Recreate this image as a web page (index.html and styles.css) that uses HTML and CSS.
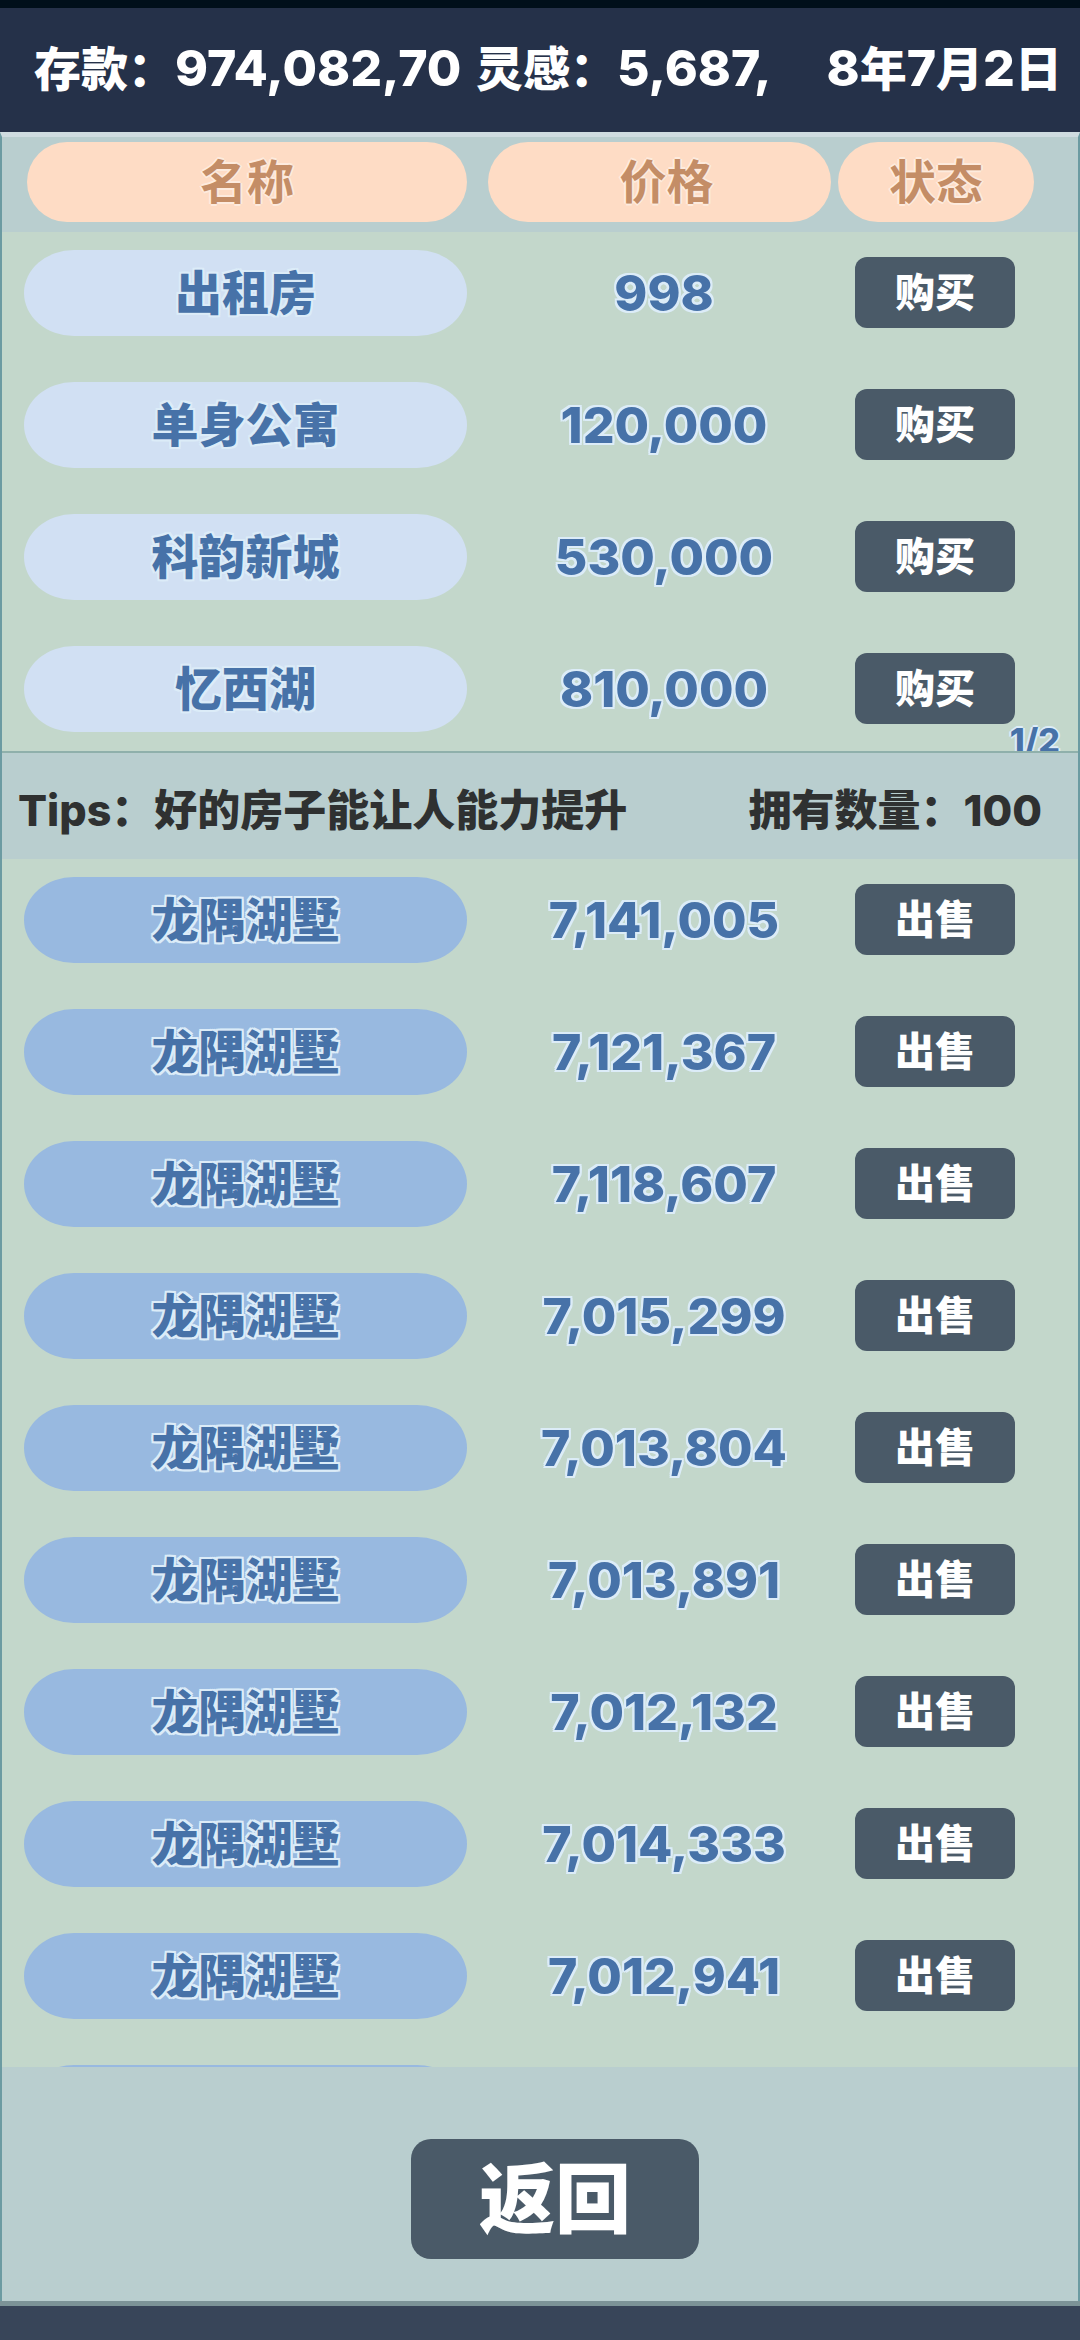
FILE: index.html
```html
<!DOCTYPE html>
<html lang="zh-CN">
<head>
  <meta charset="UTF-8" />
  <meta name="viewport" content="width=device-width, initial-scale=1.0"/>
  <title>房产</title>
  <link rel="stylesheet" href="styles.css">
</head>
<body>
  <header class="status-bar">
    <div class="stat savings">存款：<span class="digits">974,082,70</span></div>
    <div class="stat inspiration">灵感：<span class="digits">5,687,</span></div>
    <div class="stat date"><span class="digits">8</span>年<span class="digits">7</span>月<span class="digits">2</span>日</div>
  </header>

  <main class="panel">
    <section class="shop">
      <table class="houses">
        <colgroup>
          <col class="col-name"><col class="col-price"><col class="col-action">
        </colgroup>
        <thead>
          <tr>
            <th><span class="pill">名称</span></th>
            <th><span class="pill pill-price">价格</span></th>
            <th><span class="pill">状态</span></th>
          </tr>
        </thead>
        <tbody>
          <tr><td><span class="pill">出租房</span></td><td class="price">998</td><td><button class="btn">购买</button></td></tr>
          <tr><td><span class="pill">单身公寓</span></td><td class="price">120,000</td><td><button class="btn">购买</button></td></tr>
          <tr><td><span class="pill">科韵新城</span></td><td class="price">530,000</td><td><button class="btn">购买</button></td></tr>
          <tr><td><span class="pill">忆西湖</span></td><td class="price">810,000</td><td><button class="btn">购买</button></td></tr>
        </tbody>
      </table>
      <div class="page-no">1/2</div>
    </section>

    <div class="tips">
      <p>Tips：好的房子能让人能力提升</p>
      <p>拥有数量：100</p>
    </div>

    <section class="owned">
      <table class="houses">
        <colgroup>
          <col class="col-name"><col class="col-price"><col class="col-action">
        </colgroup>
        <tbody>
          <tr><td><span class="pill">龙隅湖墅</span></td><td class="price">7,141,005</td><td><button class="btn">出售</button></td></tr>
          <tr><td><span class="pill">龙隅湖墅</span></td><td class="price">7,121,367</td><td><button class="btn">出售</button></td></tr>
          <tr><td><span class="pill">龙隅湖墅</span></td><td class="price">7,118,607</td><td><button class="btn">出售</button></td></tr>
          <tr><td><span class="pill">龙隅湖墅</span></td><td class="price">7,015,299</td><td><button class="btn">出售</button></td></tr>
          <tr><td><span class="pill">龙隅湖墅</span></td><td class="price">7,013,804</td><td><button class="btn">出售</button></td></tr>
          <tr><td><span class="pill">龙隅湖墅</span></td><td class="price">7,013,891</td><td><button class="btn">出售</button></td></tr>
          <tr><td><span class="pill">龙隅湖墅</span></td><td class="price">7,012,132</td><td><button class="btn">出售</button></td></tr>
          <tr><td><span class="pill">龙隅湖墅</span></td><td class="price">7,014,333</td><td><button class="btn">出售</button></td></tr>
          <tr><td><span class="pill">龙隅湖墅</span></td><td class="price">7,012,941</td><td><button class="btn">出售</button></td></tr>
          <tr><td><span class="pill"></span></td><td></td><td></td></tr>
        </tbody>
      </table>
    </section>

    <div class="actions">
      <button class="btn btn-back">返回</button>
    </div>
  </main>

  <footer class="bottom-bar"></footer>
</body>
</html>
```

FILE: styles.css
```css
* {
  margin: 0;
  padding: 0;
  box-sizing: border-box;
}

body {
  height: 100vh;
  display: flex;
  flex-direction: column;
  overflow: hidden;
  background: #384559;
  font-family: Inter, "Noto Sans CJK SC", sans-serif;
  font-size: 47px;
  font-weight: 800;
  line-height: 60px;
}

/* top bar */
.status-bar {
  display: flex;
  align-items: center;
  height: 132px;
  padding: 0 18px 4px 34px;
  border-top: 8px solid #000f1a;
  background: #253149;
  color: #fff;
}

.stat {
  white-space: nowrap;
}

.savings {
  width: 43%;
}

.inspiration {
  flex: 1;
}

.digits {
  font-size: 50px;
}

/* main panel */
.panel {
  flex: 1;
  min-height: 0;
  display: flex;
  flex-direction: column;
  border-top: 5px solid #cfdce0;
  border-left: 2px solid #6c9ba2;
  border-right: 2px solid #6c9ba2;
  background: #b9cecf;
}

.shop {
  position: relative;
  height: 616px;
  overflow: hidden;
  border-bottom: 2px solid #8fb0ab;
}

.owned {
  flex: 1;
  min-height: 0;
  overflow: hidden;
}

.houses {
  width: 100%;
  table-layout: fixed;
  border-collapse: collapse;
  text-align: center;
}

.col-name {
  width: 45%;
}

.col-price {
  width: 32.5%;
}

th {
  padding: 5px 5px 10px 2px;
}

td {
  height: 132px;
  padding: 18px 0 28px;
}

th:first-child,
td:first-child {
  padding-left: 22px;
  padding-right: 19px;
}

th:first-child {
  padding-left: 25px;
}

th:last-child,
td:last-child {
  padding-right: 44px;
}

tbody {
  background: #c3d7cb;
  color: #4772a8;
  text-shadow: 2px 0 #dcecf8, -2px 0 #dcecf8, 0 2px #dcecf8, 0 -2px #dcecf8,
    2px 2px #dcecf8, -2px 2px #dcecf8, 2px -2px #dcecf8, -2px -2px #dcecf8;
}

.pill {
  display: block;
  height: 86px;
  border-radius: 50px / 43px;
  background: #d1e0f3;
  line-height: 86px;
}

th .pill {
  height: 80px;
  border-radius: 40px;
  background: #fedcc5;
  color: #c48d66;
  line-height: 80px;
  text-shadow: 2px 0 #fdebde, -2px 0 #fdebde, 0 2px #fdebde, 0 -2px #fdebde;
}

th .pill-price {
  padding-left: 14px;
}

.owned .pill {
  background: #98b9e0;
}

.price {
  padding-left: 6px;
  font-size: 50px;
}

.btn {
  display: block;
  width: 160px;
  height: 71px;
  margin: -2px auto 0;
  border: none;
  border-radius: 12px;
  background: #4a5a68;
  color: #fff;
  font: inherit;
  font-size: 40px;
  line-height: 71px;
  cursor: pointer;
}

.page-no {
  position: absolute;
  right: 18px;
  bottom: -10px;
  color: #4772a8;
  font-size: 34px;
  line-height: 40px;
  text-shadow: 2px 0 #dcecf8, -2px 0 #dcecf8, 0 2px #dcecf8, 0 -2px #dcecf8;
}

.tips {
  display: flex;
  justify-content: space-between;
  align-items: center;
  height: 106px;
  padding: 8px 36px 0 16px;
  color: #2f3131;
  font-size: 43px;
}

.actions {
  padding: 72px 0 42px 30px;
}

.btn-back {
  width: 288px;
  height: 120px;
  margin: 0 auto;
  border-radius: 20px;
  font-size: 76px;
  line-height: 116px;
}

.bottom-bar {
  height: 39px;
  border-top: 5px solid #7c9397;
}
```
